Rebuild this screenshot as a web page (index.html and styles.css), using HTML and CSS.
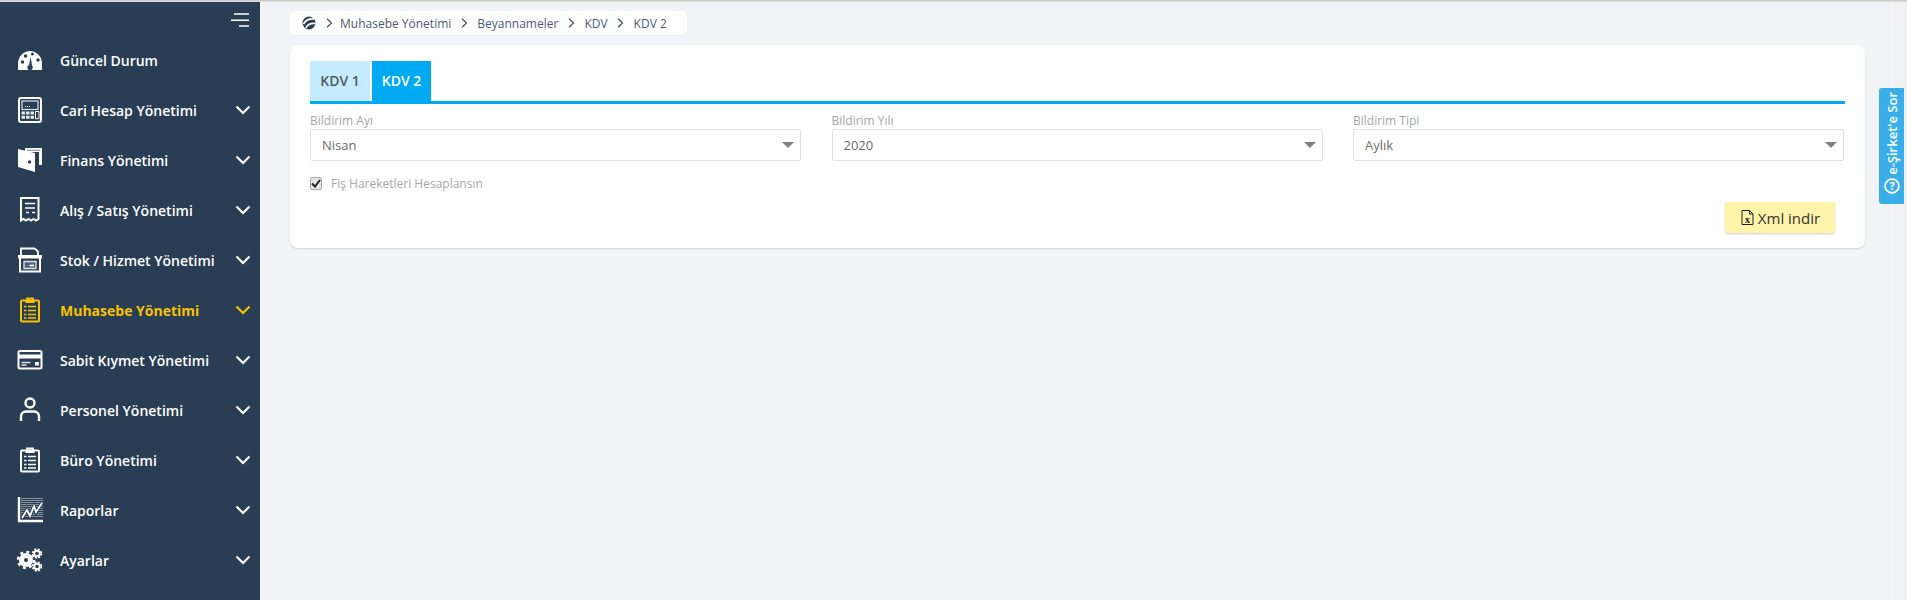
FILE: index.html
```html
<!DOCTYPE html>
<html lang="tr">
<head>
<meta charset="utf-8">
<title>KDV 2</title>
<link rel="stylesheet" href="styles.css">
</head>
<body>
<div class="topline"></div>
<div class="app">
  <aside class="sidebar">
    <div class="toggle">
      <svg width="20" height="16" viewBox="0 0 20 16"><path d="M5 1h15M2 7.300h18M10 13h10" stroke="#fff" stroke-width="1.500" fill="none"/></svg>
    </div>
    <nav>
      <a class="item"><span class="ico"><svg width="26" height="24" viewBox="0 0 26 24"><path d="M1 22v-6C1 8.500 6.500 3 13 3s12 5.500 12 13v6z" fill="#fff"/><circle cx="5.500" cy="14" r="1.700" fill="#293d54"/><circle cx="8.500" cy="8" r="1.700" fill="#293d54"/><circle cx="15.500" cy="6" r="1.500" fill="#293d54"/><circle cx="21" cy="12" r="1.700" fill="#293d54"/><path d="M11.500 20l2-11 2 11z" fill="#293d54"/><circle cx="13" cy="19.500" r="2.600" fill="#293d54"/></svg></span><span class="lbl">Güncel Durum</span></a>
      <a class="item"><span class="ico"><svg width="26" height="26" viewBox="0 0 26 26"><rect x="2" y="1" width="22" height="24" rx="2" fill="none" stroke="#fff" stroke-width="2"/><rect x="5" y="4" width="16" height="8.500" fill="none" stroke="#dfe3e8" stroke-width="1.200"/><path d="M8 9.500h6" stroke="#fff" stroke-dasharray="1 1"/><path d="M4.500 14.500h3.500v3H4.500zM9 14.500h3.500v3H9zM13.500 14.500H17v3h-3.500zM4.500 18.700h3.500v3H4.500zM9 18.700h3.500v3H9zM13.500 18.700H17v3h-3.500z" fill="#e6e9ed"/><path d="M18.500 14.500H22v7.200h-3.500z" fill="none" stroke="#fff"/></svg></span><span class="lbl">Cari Hesap Yönetimi</span><svg class="chev" width="16" height="10" viewBox="0 0 16 10"><path d="M1.500 1.500L8 8l6.500-6.500" stroke="currentColor" stroke-width="2.200" fill="none"/></svg></a>
      <a class="item"><span class="ico"><svg width="26" height="26" viewBox="0 0 26 26"><path d="M8 1h17v17h-3V5H8z" fill="#fff"/><path d="M10 3.300h13" stroke="#8a96a4" stroke-width="1.200"/><path d="M1 2l17 4v19L1 20z" fill="#fff"/><circle cx="12.500" cy="15" r="1.700" fill="#293d54"/></svg></span><span class="lbl">Finans Yönetimi</span><svg class="chev" width="16" height="10" viewBox="0 0 16 10"><path d="M1.500 1.500L8 8l6.500-6.500" stroke="currentColor" stroke-width="2.200" fill="none"/></svg></a>
      <a class="item"><span class="ico"><svg width="26" height="26" viewBox="0 0 26 26"><path d="M4 1v22.500l2.500-1.500 2.500 1.500 2.500-1.500 2.500 1.500 2.500-1.500 2.500 1.500 2.500-1.500V1z" fill="none" stroke="#fff" stroke-width="2"/><path d="M8 6.500h10M8 11h10M9 15.500h3M15 15.500h3" stroke="#fff" stroke-width="1.600"/></svg></span><span class="lbl">Alış / Satış Yönetimi</span><svg class="chev" width="16" height="10" viewBox="0 0 16 10"><path d="M1.500 1.500L8 8l6.500-6.500" stroke="currentColor" stroke-width="2.200" fill="none"/></svg></a>
      <a class="item"><span class="ico"><svg width="26" height="26" viewBox="0 0 26 26"><path d="M4 9V1.500h13.500L21 4.500V9" fill="none" stroke="#fff" stroke-width="1.800"/><path d="M1 8h24v3.500H1z" fill="#fff"/><path d="M3 11v13.500h20V11" fill="none" stroke="#fff" stroke-width="2"/><path d="M7 14.500h12v7H7z" fill="#55667a" stroke="#dfe3e8" stroke-width="1.300"/><path d="M12.500 18.500h4.500" stroke="#fff" stroke-width="1.600"/></svg></span><span class="lbl">Stok / Hizmet Yönetimi</span><svg class="chev" width="16" height="10" viewBox="0 0 16 10"><path d="M1.500 1.500L8 8l6.500-6.500" stroke="currentColor" stroke-width="2.200" fill="none"/></svg></a>
      <a class="item active"><span class="ico"><svg width="26" height="26" viewBox="0 0 26 26"><path d="M10 3.500V1.500h6v2" fill="none" stroke="#f8c200" stroke-width="1.800"/><rect x="4" y="3.500" width="18" height="21" rx="1" fill="none" stroke="#f8c200" stroke-width="2"/><path d="M8.500 3h9v3h-9z" fill="#f8c200"/><path d="M7 9.500h2.500M11 9.500h8M7 13.500h2.500M11 13.500h8M7 17.500h2.500M11 17.500h8M7 21h2.500M11 21h8" stroke="#f8c200" stroke-width="1.700"/></svg></span><span class="lbl">Muhasebe Yönetimi</span><svg class="chev" width="16" height="10" viewBox="0 0 16 10"><path d="M1.500 1.500L8 8l6.500-6.500" stroke="currentColor" stroke-width="2.200" fill="none"/></svg></a>
      <a class="item"><span class="ico"><svg width="26" height="20" viewBox="0 0 26 20"><rect x="1.500" y="1" width="23" height="17.500" rx="1.500" fill="none" stroke="#fff" stroke-width="2"/><path d="M1.500 4.500h23v4h-23z" fill="#fff"/><path d="M4.500 12.500h9M4.500 15h5" stroke="#dfe3e8" stroke-width="1.300"/><path d="M18 12h4v3.500h-4z" fill="#fff"/></svg></span><span class="lbl">Sabit Kıymet Yönetimi</span><svg class="chev" width="16" height="10" viewBox="0 0 16 10"><path d="M1.500 1.500L8 8l6.500-6.500" stroke="currentColor" stroke-width="2.200" fill="none"/></svg></a>
      <a class="item"><span class="ico"><svg width="26" height="26" viewBox="0 0 26 26"><circle cx="13" cy="6" r="4.500" fill="none" stroke="#fff" stroke-width="2.400"/><path d="M4 24v-4.500c0-3 2.500-5 5-5h8c2.500 0 5 2 5 5V24" fill="none" stroke="#fff" stroke-width="2.400"/></svg></span><span class="lbl">Personel Yönetimi</span><svg class="chev" width="16" height="10" viewBox="0 0 16 10"><path d="M1.500 1.500L8 8l6.500-6.500" stroke="currentColor" stroke-width="2.200" fill="none"/></svg></a>
      <a class="item"><span class="ico"><svg width="26" height="26" viewBox="0 0 26 26"><path d="M10 3.500V1.500h6v2" fill="none" stroke="#fff" stroke-width="1.800"/><rect x="4" y="3.500" width="18" height="21" rx="1" fill="none" stroke="#fff" stroke-width="2"/><path d="M8.500 3h9v3h-9z" fill="#fff"/><path d="M7 9.500h2.500M11 9.500h8M7 13.500h2.500M11 13.500h8M7 17.500h2.500M11 17.500h8M7 21h2.500M11 21h8" stroke="#fff" stroke-width="1.700"/></svg></span><span class="lbl">Büro Yönetimi</span><svg class="chev" width="16" height="10" viewBox="0 0 16 10"><path d="M1.500 1.500L8 8l6.500-6.500" stroke="currentColor" stroke-width="2.200" fill="none"/></svg></a>
      <a class="item"><span class="ico"><svg width="26" height="26" viewBox="0 0 26 26"><path d="M5 1v20M7 1v20M9 1v20M11 1v20M13 1v20M15 1v20M17 1v20M19 1v20M21 1v20M23 1v20M25 1v20" stroke="#e3e7ec" stroke-width="1" stroke-dasharray="1 1"/><path d="M2 0v24h24" fill="none" stroke="#fff" stroke-width="2.400"/><path d="M5 21l5-8 3 6 4-10 2 6 6-9" fill="none" stroke="#293d54" stroke-width="3.500"/><path d="M5 21l5-8 3 6 4-10 2 6 6-9" fill="none" stroke="#fff" stroke-width="1.800"/></svg></span><span class="lbl">Raporlar</span><svg class="chev" width="16" height="10" viewBox="0 0 16 10"><path d="M1.500 1.500L8 8l6.500-6.500" stroke="currentColor" stroke-width="2.200" fill="none"/></svg></a>
      <a class="item"><span class="ico"><svg width="26" height="24" viewBox="0 0 26 24"><circle cx="9" cy="12" r="4.500" fill="none" stroke="#fff" stroke-width="5"/><circle cx="9" cy="12" r="8" fill="none" stroke="#fff" stroke-width="2.500" stroke-dasharray="3 3.300"/><circle cx="20" cy="5.500" r="2.800" fill="none" stroke="#fff" stroke-width="2"/><circle cx="20" cy="5.500" r="4.400" fill="none" stroke="#fff" stroke-width="1.600" stroke-dasharray="2 1.500"/><circle cx="20" cy="18.500" r="2.800" fill="none" stroke="#fff" stroke-width="2"/><circle cx="20" cy="18.500" r="4.400" fill="none" stroke="#fff" stroke-width="1.600" stroke-dasharray="2 1.500"/></svg></span><span class="lbl">Ayarlar</span><svg class="chev" width="16" height="10" viewBox="0 0 16 10"><path d="M1.500 1.500L8 8l6.500-6.500" stroke="currentColor" stroke-width="2.200" fill="none"/></svg></a>
    </nav>
  </aside>
  <main class="main">
    <div class="crumbs">
      <svg class="logo" width="14" height="14" viewBox="0 0 14 14"><circle cx="7" cy="7" r="6.500" fill="#293d54"/><path d="M1.500 8C3.500 4.500 7 2.500 12 3M4 12C5.500 8.500 9 7 13.500 7.500" fill="none" stroke="#fff" stroke-width="1.600"/></svg>
      <svg class="sep" width="7" height="10" viewBox="0 0 7 10"><path d="M1 .8L5.500 5 1 9.200" fill="none" stroke="#414d5c" stroke-width="1.200"/></svg>
      <span class="first">Muhasebe Yönetimi</span>
      <svg class="sep" width="7" height="10" viewBox="0 0 7 10"><path d="M1 .8L5.500 5 1 9.200" fill="none" stroke="#414d5c" stroke-width="1.200"/></svg>
      <span>Beyannameler</span>
      <svg class="sep" width="7" height="10" viewBox="0 0 7 10"><path d="M1 .8L5.500 5 1 9.200" fill="none" stroke="#414d5c" stroke-width="1.200"/></svg>
      <span>KDV</span>
      <svg class="sep" width="7" height="10" viewBox="0 0 7 10"><path d="M1 .8L5.500 5 1 9.200" fill="none" stroke="#414d5c" stroke-width="1.200"/></svg>
      <span>KDV 2</span>
    </div>
    <section class="card">
      <div class="tabs">
        <button class="tab">KDV 1</button>
        <button class="tab on">KDV 2</button>
      </div>
      <div class="fields">
        <div class="field">
          <label class="flabel">Bildirim Ayı</label>
          <div class="select">Nisan</div>
        </div>
        <div class="field">
          <label class="flabel">Bildirim Yılı</label>
          <div class="select">2020</div>
        </div>
        <div class="field">
          <label class="flabel">Bildirim Tipi</label>
          <div class="select">Aylık</div>
        </div>
      </div>
      <div class="check">
        <span class="box"><svg width="10" height="9" viewBox="0 0 10 9"><path d="M1 4.500l3 3 5-6.500" fill="none" stroke="#222" stroke-width="2"/></svg></span>
        <span>Fiş Hareketleri Hesaplansın</span>
      </div>
      <div class="actions">
        <button class="xml">
          <svg width="13" height="15" viewBox="0 0 13 15"><path d="M1 .5h7.500L12 4v10.500H1z" fill="none" stroke="#222"/><path d="M8.500.5V4H12" fill="none" stroke="#222"/><text x="6.500" y="12.800" text-anchor="middle" class="xmark">x</text></svg>
          <span>Xml indir</span>
        </button>
      </div>
    </section>
  </main>
  <div class="track"></div>
</div>
<a class="ask">
  <svg class="askico" width="16" height="16" viewBox="0 0 16 16"><circle cx="8" cy="8" r="6.900" fill="none" stroke="#fff" stroke-width="1.800"/><text x="8" y="11.800" text-anchor="middle" class="qmark">?</text></svg>
  <span>e-Şirket'e Sor</span>
</a>
</body>
</html>
```
FILE: styles.css
```css
* { box-sizing: border-box; }
html, body { margin: 0; height: 600px; overflow: hidden; }
body { font-family: "Open Sans", "Noto Sans", sans-serif; background: #f3f4f8; position: relative; }
.topline { height: 2px; background: linear-gradient(#c4c4c0, #e4e4e4); }
.app { display: flex; height: 598px; }
.sidebar { width: 260px; flex: none; background: #293d54; color: #fff; }
.toggle { height: 33px; padding: 11px 11px 0 0; display: flex; justify-content: flex-end; align-items: flex-start; }
.item { display: flex; align-items: center; height: 50px; padding: 0 9px 0 17px; font-size: 14px; font-weight: 600; color: #fff; }
.item.active { color: #f8c200; font-weight: 700; }
.ico { width: 26px; height: 26px; display: flex; align-items: center; justify-content: center; margin-right: 17px; }
.lbl { flex: 1; }
.chev { flex: none; }
.main { flex: 1; padding: 9px 30px 0 30px; min-width: 0; }
.crumbs { display: inline-flex; align-items: center; height: 24px; padding: 0 20px 0 12px; background: #fff; border-radius: 5px; font-size: 12px; color: #4e5a69; gap: 9.5px; box-shadow: 0 1px 2px rgba(0,0,0,.04); vertical-align: top; }
.first { margin-left: -2px; }
.card { margin-top: 10px; height: 203px; background: #fff; border-radius: 8px; box-shadow: 0 1px 2px rgba(0,0,0,.14); padding: 16px 20px 0; }
.tabs { display: flex; gap: 2px; height: 43px; border-bottom: 3px solid #00aaf2; }
.tab { height: 40px; width: 60px; border: 0; padding: 0 0 1px; font: 600 14px "Open Sans", sans-serif; background: #c5ebff; color: #53595f; }
.tab.on { background: #00aaf2; color: #fff; width: 59px; }
.fields { display: flex; gap: 30.5px; margin-top: 8px; padding-right: 1px; }
.field { flex: 1; min-width: 0; }
.flabel { display: block; font-size: 12px; line-height: 17px; color: #a6a6a6; }
.select { position: relative; height: 32px; padding: 0 11px; border: 1px solid #e0e0e0; border-radius: 2px; font-size: 13px; line-height: 30px; color: #6b6b6b; background: #fff; }
.select::after { content: ""; position: absolute; right: 6px; top: 12px; border-style: solid; border-width: 6px 6px 0; border-color: #808080 transparent transparent; }
.check { display: flex; align-items: center; gap: 9px; margin-top: 15px; height: 14px; font-size: 12px; color: #a6a6a6; }
.box { width: 12px; height: 13px; display: flex; align-items: center; justify-content: center; background: #e4e4e4; border: 1px solid #aaa; border-radius: 2px; }
.actions { display: flex; justify-content: flex-end; margin-top: 12px; padding-right: 10px; }
.xml { display: flex; align-items: center; justify-content: center; gap: 4px; width: 110px; height: 31px; border: 0; border-radius: 2px; background: #fff4a9; box-shadow: 0 1px 2px rgba(0,0,0,.2); font: 400 15px "Open Sans", sans-serif; color: #333; padding: 0 0 0 1px; }
.xmark { font: 700 10px "Liberation Serif", serif; fill: #222; }
.track { width: 12px; flex: none; background: #f1f1f1; }
.ask { position: absolute; left: 1879px; top: 88px; width: 25px; height: 116px; display: flex; flex-direction: column-reverse; align-items: center; justify-content: flex-start; gap: 3px; padding: 9px 0 10px; background: #3aaeea; border-radius: 3px 0 0 3px; color: #fff; font-size: 13px; font-weight: 600; }
.ask span { writing-mode: vertical-rl; transform: rotate(180deg); line-height: 16px; white-space: nowrap; }
.askico { flex: none; }
.qmark { font: 700 11px "Open Sans", sans-serif; fill: #fff; }
```
